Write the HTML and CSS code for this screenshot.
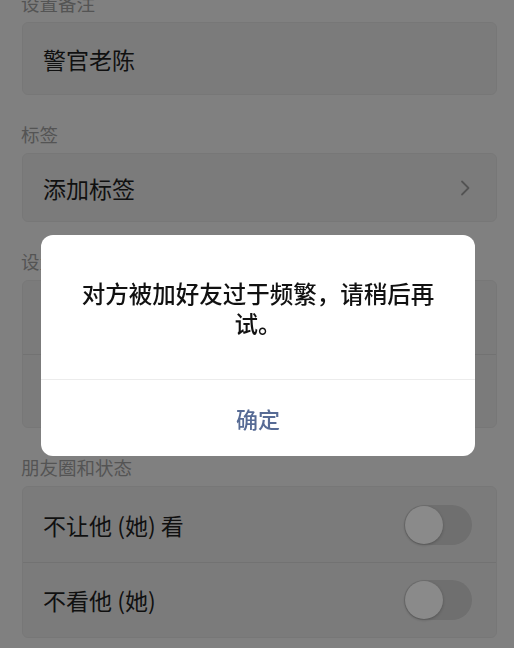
FILE: index.html
```html
<!DOCTYPE html>
<html lang="zh-CN">
<head>
<meta charset="utf-8">
<title>设置备注和标签</title>
<link rel="stylesheet" href="styles.css">
</head>
<body>
<div class="page">
  <div class="section-label">设置备注</div>
  <div class="card">
    <div class="row row-remark"><span class="row-text">警官老陈</span></div>
  </div>

  <div class="section-label">标签</div>
  <div class="card">
    <div class="row row-tag">
      <span class="row-text">添加标签</span>
      <svg class="chevron" width="12" height="18" viewBox="0 0 12 18"><path d="M3 2.5 L9.5 9 L3 15.5" fill="none" stroke="currentColor" stroke-width="1.8" stroke-linecap="round" stroke-linejoin="round"/></svg>
    </div>
  </div>

  <div class="section-label">设置朋友权限</div>
  <div class="card">
    <div class="row"></div>
    <div class="row row-divided"></div>
  </div>

  <div class="section-label">朋友圈和状态</div>
  <div class="card">
    <div class="row row-toggle"><span class="row-text">不让他 (她) 看</span><span class="switch"><span class="knob"></span></span></div>
    <div class="row row-toggle row-divided"><span class="row-text">不看他 (她)</span><span class="switch"><span class="knob"></span></span></div>
  </div>
</div>

<div class="mask">
  <div class="dialog">
    <div class="dialog-msg">对方被加好友过于频繁，请稍后再试。</div>
    <div class="dialog-btn">确定</div>
  </div>
</div>
</body>
</html>
```

FILE: styles.css
```css
html, body {
  margin: 0;
  padding: 0;
}
body {
  width: 514px;
  height: 648px;
  overflow: hidden;
  background: #ededed;
  font-family: "Noto Sans CJK SC", "Noto Sans", "Liberation Sans", sans-serif;
  color: #222222;
}
.page {
  margin-top: -36px;
  display: flex;
  flex-direction: column;
}
.section-label {
  padding: 28px 0 8px 21px;
  font-size: 18.5px;
  line-height: 22px;
  color: #9c9c9c;
}
.card {
  margin: 0 17px 0 22px;
  background: #e4e4e4;
  border: 1px solid #dddddd;
  border-radius: 6px;
  display: flex;
  flex-direction: column;
}
.row {
  height: 73px;
  padding: 0 24px 0 20px;
  display: flex;
  align-items: center;
  justify-content: space-between;
  box-sizing: border-box;
}
.row-remark { height: 71px; }
.row-tag { height: 67px; padding-right: 25px; }
.row-toggle { height: 75px; }
.row-divided { border-top: 1px solid #d2d2d2; }
.row-text {
  font-size: 23px;
  line-height: 30px;
  color: #1f1f1f;
}
.chevron {
  color: #9a9a9a;
  display: block;
}
.switch {
  width: 68px;
  height: 40px;
  border-radius: 20px;
  background: #cdcdcd;
  display: flex;
  align-items: center;
  padding-left: 1px;
  box-sizing: border-box;
}
.knob {
  width: 38px;
  height: 38px;
  border-radius: 50%;
  background: #ffffff;
  box-shadow: 0 1px 3px rgba(0, 0, 0, 0.25);
}
.mask {
  position: fixed;
  inset: 0;
  background: rgba(0, 0, 0, 0.46);
  display: flex;
  justify-content: center;
  align-items: flex-start;
  padding: 235px 0 0 2px;
}
.dialog {
  width: 434px;
  background: #ffffff;
  border-radius: 12px;
  overflow: hidden;
  display: flex;
  flex-direction: column;
}
.dialog-msg {
  padding: 43px 30px 41px;
  font-size: 23.5px;
  line-height: 30px;
  text-align: center;
  color: #111111;
  font-weight: 500;
}
.dialog-btn {
  height: 76px;
  border-top: 1px solid #ececec;
  display: flex;
  align-items: center;
  justify-content: center;
  font-size: 22px;
  color: #576b95;
  font-weight: 500;
}
```
